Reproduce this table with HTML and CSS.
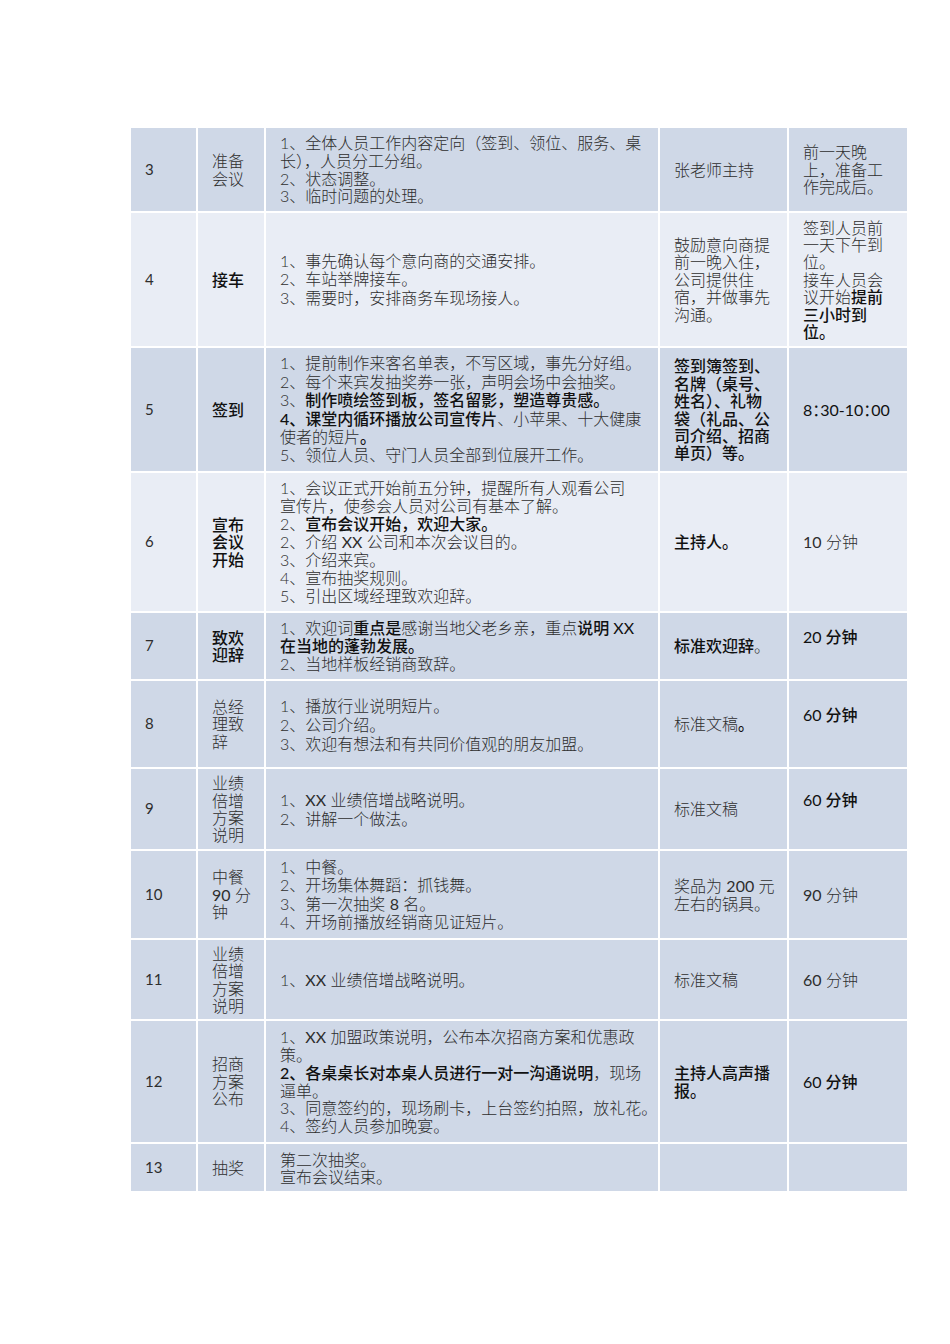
FILE: index.html
```html
<!DOCTYPE html>
<html lang="zh-CN">
<head>
<meta charset="utf-8">
<title>会议流程</title>
<link rel="stylesheet" href="styles.css">
</head>
<body>
<div class="page">
<table class="plan">
<colgroup>
<col class="w1"><col class="w2"><col class="w3"><col class="w4"><col class="w5">
</colgroup>
<tbody>
<tr class="dark r3">
<td class="num">3</td>
<td>准备<br>会议</td>
<td class="c3">1、全体人员工作内容定向（签到、领位、服务、桌<br>长），人员分工分组。<br>2、状态调整。<br>3、临时问题的处理。</td>
<td>张老师主持</td>
<td>前一天晚<br>上，准备工<br>作完成后。</td>
</tr>
<tr class="light r4">
<td class="num">4</td>
<td><span class="b">接车</span></td>
<td class="c3 lh185">1、事先确认每个意向商的交通安排。<br>2、车站举牌接车。<br>3、需要时，安排商务车现场接人。</td>
<td>鼓励意向商提<br>前一晚入住，<br>公司提供住<br>宿，并做事先<br>沟通。</td>
<td>签到人员前<br>一天下午到<br>位。<br>接车人员会<br>议开始<span class="b">提前<br>三小时到<br>位。</span></td>
</tr>
<tr class="dark r5">
<td class="num">5</td>
<td><span class="b">签到</span></td>
<td class="c3 lh185">1、提前制作来客名单表，不写区域，事先分好组。<br>2、每个来宾发抽奖券一张，声明会场中会抽奖。<br>3、<span class="b">制作喷绘签到板，签名留影，塑造尊贵感。</span><br><span class="b">4、课堂内循环播放公司宣传片</span>、小苹果、十大健康<br>使者的短片<span class="b">。</span><br>5、领位人员、守门人员全部到位展开工作。</td>
<td><span class="b">签到簿签到、<br>名牌（桌号、<br>姓名）、礼物<br>袋（礼品、公<br>司介绍、招商<br>单页）等。</span></td>
<td><span class="b n halt">8：30-10：00</span></td>
</tr>
<tr class="light r6">
<td class="num">6</td>
<td><span class="b">宣布<br>会议<br>开始</span></td>
<td class="c3">1、会议正式开始前五分钟，提醒所有人观看公司<br>宣传片，使参会人员对公司有基本了解。<br>2、<span class="b">宣布会议开始，欢迎大家。</span><br>2、介绍 <span class="n">XX</span> 公司和本次会议目的。<br>3、介绍来宾。<br>4、宣布抽奖规则。<br>5、引出区域经理致欢迎辞。</td>
<td><span class="b">主持人。</span></td>
<td><span class="n">10</span> 分钟</td>
</tr>
<tr class="dark r7">
<td class="num">7</td>
<td><span class="b">致欢<br>迎辞</span></td>
<td class="c3">1、欢迎词<span class="b">重点是</span>感谢当地父老乡亲，重点<span class="b">说明 <span class="n">XX</span><br>在当地的蓬勃发展。</span><br>2、当地样板经销商致辞。</td>
<td><span class="b">标准欢迎辞</span>。</td>
<td class="up"><span class="b"><span class="n">20</span> 分钟</span></td>
</tr>
<tr class="dark r8">
<td class="num">8</td>
<td>总经<br>理致<br>辞</td>
<td class="c3 lh19">1、播放行业说明短片。<br>2、公司介绍。<br>3、欢迎有想法和有共同价值观的朋友加盟。</td>
<td>标准文稿<span class="b">。</span></td>
<td class="up"><span class="b"><span class="n">60</span> 分钟</span></td>
</tr>
<tr class="dark r9">
<td class="num">9</td>
<td>业绩<br>倍增<br>方案<br>说明</td>
<td class="c3 lh19">1、<span class="n">XX</span> 业绩倍增战略说明。<br>2、讲解一个做法。</td>
<td>标准文稿</td>
<td class="up"><span class="b"><span class="n">60</span> 分钟</span></td>
</tr>
<tr class="dark r10">
<td class="num">10</td>
<td>中餐<br><span class="n">90</span> 分<br>钟</td>
<td class="c3 lh185">1、中餐。<br>2、开场集体舞蹈：抓钱舞。<br>3、第一次抽奖 <span class="n">8</span> 名。<br>4、开场前播放经销商见证短片。</td>
<td>奖品为 <span class="n">200</span> 元<br>左右的锅具。</td>
<td><span class="n">90</span> 分钟</td>
</tr>
<tr class="dark r11">
<td class="num">11</td>
<td>业绩<br>倍增<br>方案<br>说明</td>
<td class="c3">1、<span class="n">XX</span> 业绩倍增战略说明。</td>
<td>标准文稿</td>
<td><span class="n">60</span> 分钟</td>
</tr>
<tr class="dark r12">
<td class="num">12</td>
<td>招商<br>方案<br>公布</td>
<td class="c3">1、<span class="n">XX</span> 加盟政策说明，公布本次招商方案和优惠政<br>策。<br><span class="b">2、各桌桌长对本桌人员进行一对一沟通说明</span>，现场<br>逼单。<br>3、同意签约的，现场刷卡，上台签约拍照，放礼花。<br>4、签约人员参加晚宴。</td>
<td><span class="b">主持人高声播<br>报。</span></td>
<td><span class="b"><span class="n">60</span> 分钟</span></td>
</tr>
<tr class="dark r13">
<td class="num">13</td>
<td>抽奖</td>
<td class="c3 lh17">第二次抽奖。<br>宣布会议结束。</td>
<td></td>
<td></td>
</tr>
</tbody>
</table>
</div>
</body>
</html>
```
FILE: styles.css
```css
html, body {
  margin: 0;
  padding: 0;
  background: #ffffff;
}

.page {
  padding: 126px 0 0 129px;
}

.plan {
  border-collapse: collapse;
  table-layout: fixed;
  width: 778px;
  font-family: Lato, "Noto Sans CJK SC", sans-serif;
  font-size: 16px;
  line-height: 17.4px;
  color: #2e2e2e;
  font-weight: 300;
}

.w1 { width: 67px; }
.w2 { width: 68px; }
.w3 { width: 394px; }
.w4 { width: 129px; }
.w5 { width: 120px; }

.plan td {
  border: 2px solid #ffffff;
  padding: 0 2px 0 14px;
  vertical-align: middle;
  white-space: nowrap;
  overflow: hidden;
}

.dark td { background: #cfd8e7; }
.light td { background: #e9edf5; }

.plan td.num {
  font-size: 15px;
  font-weight: 400;
  color: #2e2e2e;
}

.c3 { line-height: 17.9px; }
.lh185 { line-height: 18.4px; }
.lh19 { line-height: 19px; }
.lh17 { line-height: 17px; }

.b {
  font-weight: 500;
  color: #111111;
}

.n {
  font-weight: 400;
}

.halt {
  font-feature-settings: "halt" 1;
}

.plan td.up { padding-bottom: 18px; }

.r3 { height: 85px; }
.r4 { height: 135px; }
.r5 { height: 125px; }
.r6 { height: 140px; }
.r7 { height: 68px; }
.r8 { height: 88px; }
.r9 { height: 82px; }
.r10 { height: 89px; }
.r11 { height: 81px; }
.r12 { height: 123px; }
.r13 { height: 49px; }
```
